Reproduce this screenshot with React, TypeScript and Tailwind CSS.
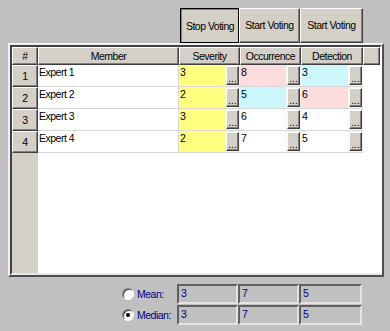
import React from "react";

const COLS = [
  { key: "sev", title: "Severity", w: "w-[61px]" },
  { key: "occ", title: "Occurrence", w: "w-[61px]" },
  { key: "det", title: "Detection", w: "w-[62px]" },
];

type Cell = { v: string; bg: string };

const ROWS: { name: string; cells: Cell[] }[] = [
  { name: "Expert 1", cells: [{ v: "3", bg: "bg-[#ffff80]" }, { v: "8", bg: "bg-[#fcdcdc]" }, { v: "3", bg: "bg-[#ccf8fc]" }] },
  { name: "Expert 2", cells: [{ v: "2", bg: "bg-[#ffff80]" }, { v: "5", bg: "bg-[#ccf8fc]" }, { v: "6", bg: "bg-[#fcdcdc]" }] },
  { name: "Expert 3", cells: [{ v: "3", bg: "bg-[#ffff80]" }, { v: "6", bg: "bg-white" }, { v: "4", bg: "bg-white" }] },
  { name: "Expert 4", cells: [{ v: "2", bg: "bg-[#ffff80]" }, { v: "7", bg: "bg-white" }, { v: "5", bg: "bg-white" }] },
];

const STATS = [
  { label: "Mean:", vals: ["3", "7", "5"], checked: false },
  { label: "Median:", vals: ["3", "7", "5"], checked: true },
];

const raised = "border border-t-white border-l-white border-r-[#404040] border-b-[#404040] shadow-[inset_-1px_-1px_#808080]";

function DotsButton() {
  return (
    <div className={`w-[13px] h-[19px] bg-[#d4d0c8] ${raised} flex items-end justify-center text-[10px] leading-[9px] pb-[1px] tracking-normal`}>
      ...
    </div>
  );
}

function Radio({ checked }: { checked: boolean }) {
  return (
    <div className="w-[12px] h-[12px] rounded-full bg-white border border-t-[#808080] border-l-[#808080] border-r-white border-b-white shadow-[inset_1px_1px_#404040] flex items-center justify-center">
      {checked && <div className="w-[4px] h-[4px] rounded-full bg-black" />}
    </div>
  );
}

export default function App() {
  return (
    <div className="w-[390px] h-[331px] bg-[#c0c0c0] pt-2 pl-2 text-[10.5px] leading-[13px] tracking-[-0.5px] whitespace-nowrap text-black font-['Liberation_Sans',Arial,sans-serif]">
      {/* Voting buttons */}
      <div className="flex justify-end pr-[27px] h-[35px]">
        <div className="w-[59px] h-full bg-[#d4d0c8] border border-black shadow-[inset_1px_1px_#808080] flex items-center justify-center pt-[2px] pl-[1px]">
          Stop Voting
        </div>
        <div className={`w-[61px] h-full bg-[#d4d0c8] ${raised} flex items-center justify-center`}>Start Voting</div>
        <div className={`w-[63px] h-full bg-[#d4d0c8] ${raised} flex items-center justify-center`}>Start Voting</div>
      </div>

      {/* Grid panel */}
      <div className="w-[376px] h-[234px] border-2 border-t-[#f0f0f0] border-l-[#f0f0f0] border-r-[#505050] border-b-[#505050]">
        <div className="w-full h-full border-2 border-t-[#404040] border-l-[#404040] border-r-white border-b-[#e8e8e8] flex bg-white">
          {/* row header column */}
          <div className="w-[26px] h-full bg-[#d4d0c8] flex flex-col">
            <div className={`h-[18px] ${raised} flex items-center justify-center`}>#</div>
            {ROWS.map((r, i) => (
              <div key={r.name} className={`h-[22px] ${raised} flex items-end justify-center pb-[3px]`}>{i + 1}</div>
            ))}
          </div>
          <div className="flex-1 flex flex-col">
            {/* header */}
            <div className="h-[18px] flex bg-[#d4d0c8]">
              <div className={`w-[141px] ${raised} flex items-center justify-center`}>Member</div>
              {COLS.map((c) => (
                <div key={c.key} className={`${c.w} ${raised} flex items-center justify-center`}>{c.title}</div>
              ))}
              <div className={`flex-1 ${raised}`} />
            </div>
            {ROWS.map((r) => (
              <div key={r.name} className="h-[22px] flex">
                <div className="w-[141px] border-b border-r border-[#d8d8d8] pl-[1px] pt-[1px]">{r.name}</div>
                {r.cells.map((c, j) => (
                  <div key={j} className={`${COLS[j].w} flex border-b border-[#d8d8d8] bg-[#f4f4f4]`}>
                    <div className={`flex-1 ${c.bg} pl-[1px] pt-[1px]`}>{c.v}</div>
                    <div className="pt-[1px] px-[1px]"><DotsButton /></div>
                  </div>
                ))}
              </div>
            ))}
          </div>
        </div>
      </div>

      {/* Summary */}
      <div className="mt-[7px] flex flex-col gap-[1px] pl-[114px] text-[#000080]">
        {STATS.map((s) => (
          <div key={s.label} className="flex items-center h-[20px]">
            <Radio checked={s.checked} />
            <span className="ml-[3px] w-[40px]">{s.label}</span>
            {s.vals.map((v, i) => (
              <div
                key={i}
                className={`${i === 2 ? "w-[63px]" : "w-[61px]"} h-[20px] border-2 border-t-[#606060] border-l-[#606060] border-r-[#e4e4e4] border-b-[#e4e4e4] pl-[2px] pt-[1px]`}
              >
                {v}
              </div>
            ))}
          </div>
        ))}
      </div>
    </div>
  );
}
